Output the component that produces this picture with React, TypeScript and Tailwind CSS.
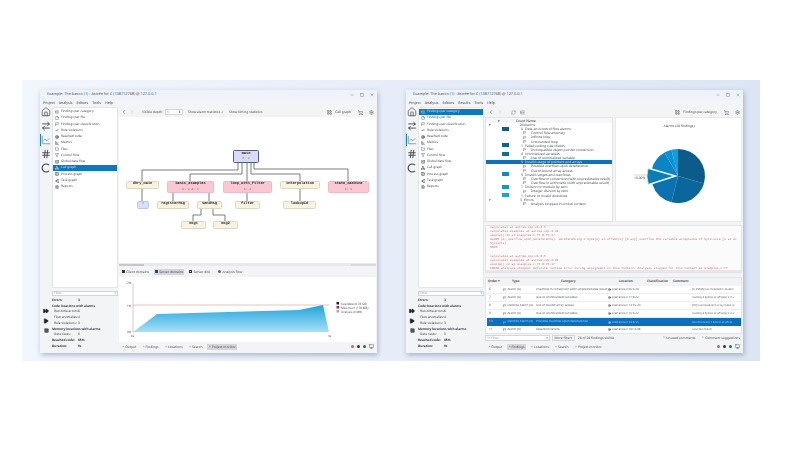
import React from "react";
import { Home, ArrowRightLeft, ChartLine, Hash, ChevronLeft, ChevronRight, Minus, Square, X, FileText, File, Folder, CheckCheck, Target, ChartBar, Filter, Database, Network, Grid2x2, ListTree, Share2, Settings, LayoutGrid, ShoppingCart, Flag, RefreshCw, Monitor, Play, FastForward, Search } from "lucide-react";

const NAV: [string, any][] = [
  ["Findings per category", ListTree], ["Findings per file", File], ["Findings per classification", Flag],
  ["Rule violations", CheckCheck], ["Reached code", Target], ["Metrics", ChartBar], ["Files", Folder],
  ["Control flow", Filter], ["Global data flow", Database], ["Call graph", Network], ["Process graph", Grid2x2],
  ["Task graph", Share2], ["Reports", FileText],
];

function StatRow({ label, value, bold, indent }: { label: string; value?: string; bold?: boolean; indent?: boolean }) {
  return (
    <div className={`flex h-[5.75px] items-center whitespace-nowrap ${bold ? "font-bold" : ""} ${indent ? "pl-[2px]" : ""}`}>
      <span className={indent ? "w-[24px]" : "w-[26px]"}>{label}</span>
      {value && <span>{value}</span>}
    </div>
  );
}

function Sidebar() {
  return (
    <div className="relative flex h-full w-[12px] shrink-0 flex-col items-center">
      <div className="flex flex-col items-center gap-[4px] text-[#33383f]">
        <Home size={10} strokeWidth={1.6} />
        <ArrowRightLeft size={10} strokeWidth={2} />
        <ChartLine size={10} strokeWidth={1.4} className="text-[#1f6f9e]" />
        <Hash size={10} strokeWidth={2} />
        <svg width="10" height="10" viewBox="0 0 10 10" fill="none" stroke="#3b4046" strokeWidth="1.1"><path d="M8 2.2A4 4 0 1 0 8 7.8" /></svg>
      </div>
      <div className="absolute left-0 top-[27px] h-[12px] w-[1px] bg-[#1f7fb8]" />
      <div className="mt-[135px] flex flex-col items-center gap-[4px] text-[#1c1f24]">
        <FastForward size={6} fill="currentColor" />
        <Play size={6} fill="currentColor" />
        <Square size={5} fill="#555" className="text-[#444]" />
      </div>
    </div>
  );
}

function NavColumn({ selected }: { selected: string }) {
  return (
    <div className="flex h-full w-[66px] shrink-0 flex-col text-[3.2px]">
      <div className="h-[181px] overflow-hidden rounded-[1px] border border-[#e4e5e8] bg-white pt-[0.5px]">
        {NAV.map(([name, Icon]) => (
          <div key={name} className={`flex h-[6.28px] items-center gap-[2px] whitespace-nowrap pl-[2px] ${name === selected ? "bg-[#0a78c8] text-[#bfe0fa]" : "text-[#44494f]"}`}>
            <Icon size={4} strokeWidth={2.5} />
            <span>{name}</span>
          </div>
        ))}
      </div>
      <div className="mt-[3px] flex h-[5px] items-center justify-between border border-[#d5d6d9] bg-white px-[1px] text-[#9a9ea5]">
        <span>Filter...</span><span>▾</span>
      </div>
      <div className="mt-[1.5px] text-[#33373d]">
        <StatRow label="Errors:" value="3" bold />
        <StatRow label="Code locations with alarms" bold />
        <StatRow label="Run-time errors:" value="6" indent />
        <StatRow label="Flow anomalies:" value="4" indent />
        <StatRow label="Rule violations:" value="3" indent />
        <StatRow label="Memory locations with alarms" bold />
        <StatRow label="Data races:" value="0" indent />
        <StatRow label="Reached code:" value="85%" bold />
        <StatRow label="Duration:" value="9s" bold />
      </div>
    </div>
  );
}

function BottomTabs({ active }: { active: string }) {
  return (
    <div className="flex h-[9.5px] shrink-0 items-center justify-between pl-[2px] pr-[2px] text-[#4b5057]">
      <div className="flex items-center gap-[3.5px]">
        {["Output", "Findings", "Locations", "Search", "Project monitor"].map((t) => (
          <span key={t} className={`flex h-[6.5px] items-center whitespace-nowrap px-[1.5px] ${t === active ? "bg-[#d5d6da]" : ""}`}>^ {t}</span>
        ))}
      </div>
      <div className="flex items-center gap-[3px]">
        <span className="h-[3px] w-[3px] rounded-full bg-[#e2555f]" />
        <span className="h-[3px] w-[3px] rounded-full bg-[#2b3a2c]" />
        <span className="h-[3px] w-[3px] rounded-full bg-[#157a3c]" />
        <Monitor size={5} className="text-[#444]" />
      </div>
    </div>
  );
}

function Win({ title, menu, children, selected }: { title: string; menu: string[]; children: React.ReactNode; selected: string }) {
  return (
    <div className="flex h-[262.5px] w-[337px] shrink-0 flex-col bg-[#f3f4f6] text-[3.3px] leading-none shadow-[1px_2px_5px_rgba(70,90,120,0.4)]">
      <div className="flex h-[10px] shrink-0 items-center justify-between bg-[#eef3fa] pl-[7px] pr-[3px] text-[3.8px] text-[#4e535a]">
        <span className="whitespace-nowrap">{title}</span>
        <div className="flex items-center gap-[6px]"><Minus size={4} /><Square size={4} /><X size={4} /></div>
      </div>
      <div className="flex h-[7px] shrink-0 items-center gap-[4px] pl-[3px] text-[3.6px] text-[#3c4148]">
        {menu.map((m) => <span key={m}>{m}</span>)}
      </div>
      <div className="flex min-h-0 flex-1">
        <Sidebar />
        <NavColumn selected={selected} />
        <div className="flex min-w-0 flex-1 flex-col pl-[1px] pr-[1px]">{children}</div>
      </div>
    </div>
  );
}

const NODES: { x: number; y: number; w: number; h: number; t: string; sub?: string; k: string }[] = [
  { x: 232, y: 150, w: 26, h: 13, t: "main", sub: "E: 3", k: "m" },
  { x: 125, y: 181, w: 33, h: 8, t: "dhry_main", k: "b" },
  { x: 166, y: 181, w: 47, h: 12, t: "basic_examples", sub: "E: 2  A: 3", k: "p" },
  { x: 222, y: 181, w: 49, h: 12, t: "loop_with_filter", sub: "E: 1", k: "p" },
  { x: 279, y: 181, w: 40, h: 8, t: "interpolation", k: "b" },
  { x: 327, y: 181, w: 41, h: 12, t: "state_machine", sub: "E: 1", k: "p" },
  { x: 136, y: 201, w: 12, h: 8, t: "-", k: "u" },
  { x: 156, y: 201, w: 32, h: 8, t: "registerMsg", k: "b" },
  { x: 196, y: 201, w: 25, h: 8, t: "sendMsg", k: "b" },
  { x: 234, y: 201, w: 25, h: 8, t: "filter", k: "b" },
  { x: 282, y: 201, w: 33, h: 8, t: "lookupId", k: "b" },
  { x: 180, y: 221, w: 25, h: 8, t: "msg1", k: "b" },
  { x: 212, y: 221, w: 25, h: 8, t: "msg2", k: "b" },
];
const STYLE: Record<string, string> = {
  m: "bg-[#d9dcf6] border-[#4f5c8c]",
  b: "bg-[#f8f2e0] border-[#ddd6c0]",
  p: "bg-[#fac8d2] border-[#f3b8c6]",
  u: "bg-[#d8e0f6] border-[#bcc8e8]",
};
const EDGES = [
  "M237 163V170H141V181", "M241 163V174H189V181", "M246 163V181", "M250 163V174H299V181", "M253 163V169H347V181",
  "M141 189V201", "M172 193V201", "M208 193V201", "M246 193V201", "M299 189V201",
  "M200 209V215H192V221", "M212 209V215H224V221",
];

function CallGraph() {
  return (
    <div className="relative h-[146px] shrink-0 overflow-hidden bg-white">
      <svg className="absolute inset-0" width="258" height="146" viewBox="118 117 258 146">
        {EDGES.map((d) => <path key={d} d={d} fill="none" stroke="#6a6d72" strokeWidth="0.9" />)}
      </svg>
      {NODES.map((n) => (
        <div key={n.t} style={{ left: n.x - 118, top: n.y - 117, width: n.w, height: n.h }}
          className={`absolute flex flex-col items-center justify-center gap-[1px] rounded-[1.5px] border-[0.6px] font-['Liberation_Mono',monospace] text-[3.6px] font-bold text-[#222] ${STYLE[n.k]}`}>
          <span>{n.t}</span>
          {n.sub && <span className="text-[3px] font-normal text-[#b0485c]">{n.sub}</span>}
        </div>
      ))}
    </div>
  );
}

function MonitorChart() {
  return (
    <div className="h-[65px] shrink-0 bg-white">
      <svg width="258" height="65" viewBox="118 277 258 65" fontSize="3" fill="#555">
        <defs>
          <linearGradient id="mem" x1="0" y1="0" x2="0" y2="1">
            <stop offset="0" stopColor="#1fa3dc" />
            <stop offset="1" stopColor="#a6e0f7" />
          </linearGradient>
        </defs>
        <path d="M132 332L156 314L298 310L322 305L328 332Z" fill="url(#mem)" />
        <path d="M132 283V333" stroke="#9a9a9a" strokeWidth="0.5" />
        <path d="M132 305H328" stroke="#e5968c" strokeWidth="0.6" />
        <text x="126" y="284">2%</text>
        <text x="126" y="307">1%</text>
        <text x="126" y="333">0%</text>
        <text x="130" y="337">0s</text>
        <text x="327" y="337">3s</text>
        <rect x="335.5" y="302" width="2.5" height="2.5" fill="#161b3a" />
        <rect x="335.5" y="306" width="2.5" height="2.5" fill="#c01f3c" />
        <rect x="335.5" y="310" width="2.5" height="2.5" fill="#8fb0d8" />
        <text x="340" y="304.5">Available (8.78 GB)</text>
        <text x="340" y="308.5">Maximum (178 MB)</text>
        <text x="340" y="312.5">Analysis (0 MB)</text>
      </svg>
    </div>
  );
}

function Window1() {
  return (
    <Win selected="Call graph" menu={["Project", "Analysis", "Editors", "Tools", "Help"]} title="Example: The basics (1) - Astrée for C (138712768) @ 127.0.0.1">
      <div className="flex h-[10px] shrink-0 items-center justify-between pl-[2px] pr-[2px] text-[#4b5057]">
        <div className="flex items-center gap-[2px]">
          <ChevronLeft size={6} /><ChevronRight size={6} className="text-[#b5b8bd]" />
          <span className="ml-[5px] whitespace-nowrap">Visible depth:</span>
          <span className="flex h-[5.5px] w-[18px] items-center justify-between border border-[#d5d6d9] bg-white px-[1px]">1<span>⇕</span></span>
          <span className="ml-[3px] whitespace-nowrap">Show alarm statistics ✓</span>
          <span className="ml-[3px] whitespace-nowrap">Show timing statistics</span>
        </div>
        <div className="flex items-center gap-[3px]">
          <LayoutGrid size={5} /><span className="whitespace-nowrap">Call graph</span>
          <ShoppingCart size={5} className="ml-[4px]" /><Settings size={5} className="ml-[3px]" />
        </div>
      </div>
      <CallGraph />
      <div className="flex h-[3px] shrink-0 items-center justify-between bg-[#e8e9ec]">
        <div className="h-[2px] w-[25px] bg-[#c5c7cb]" />
        <div className="h-[2px] w-[25px] bg-[#d7d8dc]" />
      </div>
      <div className="flex h-[11px] shrink-0 items-center gap-[4px] pl-[2px] text-[#4b5057]">
        <span className="flex items-center gap-[1px] whitespace-nowrap px-[1px]"><span className="h-[3px] w-[3px] bg-[#333]" />Client domains</span>
        <span className="flex h-[6px] items-center gap-[1px] whitespace-nowrap bg-[#d5d6da] px-[1px]"><span className="h-[3px] w-[3px] bg-[#1f4e79]" />Server domains</span>
        <span className="flex items-center gap-[1px] whitespace-nowrap px-[1px]"><span className="h-[3px] w-[3px] border-[0.5px] border-[#333]" />Server disk</span>
        <span className="ml-[3px] flex items-center gap-[1px] whitespace-nowrap"><span className="h-[3px] w-[3px] rounded-full bg-[#666]" />Analysis flow</span>
      </div>
      <MonitorChart />
      <BottomTabs active="Project monitor" />
    </Win>
  );
}

const TREE: { n?: string; t: string; lvl: number; bar?: string }[] = [
  { n: "26", t: "Alarms", lvl: 0 },
  { n: "6", t: "Data and control flow alarms", lvl: 1, bar: "#0b5f86" },
  { n: "1", t: "Control flow anomaly", lvl: 2 },
  { n: "2", t: "Infinite loop", lvl: 2 },
  { n: "3", t: "Unbounded loop", lvl: 2 },
  { n: "1", t: "Failed coding rule checks", lvl: 1, bar: "#0b6590" },
  { n: "1", t: "Incompatible object pointer conversion", lvl: 2 },
  { n: "4", t: "Uninitialized variables", lvl: 1, bar: "#0b6d9c" },
  { n: "4", t: "Use of uninitialized variable", lvl: 2 },
  { n: "5", t: "Invalid usage of pointers and arrays", lvl: 1 },
  { n: "2", t: "Possible overflow upon dereference", lvl: 2 },
  { n: "3", t: "Out of bound array access", lvl: 2 },
  { n: "5", t: "Invalid ranges and overflows", lvl: 1, bar: "#0b8cc4" },
  { n: "3", t: "Overflow in conversion (with unpredictable result)", lvl: 2 },
  { n: "2", t: "Overflow in arithmetic (with unpredictable result)", lvl: 2 },
  { n: "1", t: "Division or modulo by zero", lvl: 1, bar: "#0b98cc" },
  { n: "1", t: "Integer division by zero", lvl: 2 },
  { n: "1", t: "Failure or invalid directives", lvl: 1, bar: "#17a5d8" },
  { n: "3", t: "Errors", lvl: 0 },
  { n: "3", t: "Analysis stopped in critical context", lvl: 2 },
];

function TreePane() {
  return (
    <div className="w-[128px] shrink-0 overflow-hidden border border-[#e2e3e6] bg-white text-[3.4px]">
      <div className="flex h-[4.5px] items-center bg-[#f6f6f8] text-[#333]">
        <span className="ml-[12px]">▾</span>
        <span className="ml-[16px] whitespace-nowrap">Count Name</span>
      </div>
      {TREE.map((r, i) => (
        <div key={i} className={`flex h-[4.17px] items-center whitespace-nowrap ${i === 9 ? "bg-[#0a72c4] text-[#bfe0fa]" : "text-[#4b5057]"}`}>
          <span className="w-[16px] pl-[3px]">{r.lvl === 0 ? "▾" : ""}</span>
          <span className="h-[4px] w-[7px] shrink-0" style={{ background: r.bar }} />
          <span className={r.lvl === 0 ? "ml-[11px] w-[3px]" : r.lvl === 1 ? "ml-[12px] w-[3px]" : "ml-[14px] w-[7px]"}>{r.lvl === 2 ? <Flag size={3} strokeWidth={3} /> : r.n}</span>
          <span className="ml-[1px]">{r.t}</span>
        </div>
      ))}
    </div>
  );
}

function polar(cx: number, cy: number, r: number, deg: number) {
  const a = ((deg - 90) * Math.PI) / 180;
  return [cx + r * Math.cos(a), cy + r * Math.sin(a)];
}
function slice(cx: number, cy: number, r: number, a: number, b: number) {
  const [x1, y1] = polar(cx, cy, r, a);
  const [x2, y2] = polar(cx, cy, r, b);
  return `M${cx} ${cy}L${x1} ${y1}A${r} ${r} 0 ${b - a > 180 ? 1 : 0} 1 ${x2} ${y2}Z`;
}
const PIE: [number, number, string][] = [
  [0, 106, "#0b5c88"], [106, 194, "#0b669c"], [194, 252, "#0a72ae"], [286, 330, "#0a84c2"], [330, 346, "#0a92d2"], [346, 360, "#0a9fe0"],
];

function PiePane() {
  return (
    <div className="ml-[2px] min-w-0 flex-1 border border-[#e8e9ec] bg-white">
      <svg width="127" height="103" viewBox="614 118 127 103" fontSize="3.3" fill="#444">
        <text x="677" y="127" textAnchor="middle">Alarms (26 findings)</text>
        {PIE.map(([a, b, c]) => <path key={a} d={slice(676, 176, 27, a, b)} fill={c} />)}
        <path d={slice(672, 176, 27, 252, 286)} fill="#0a7cb8" stroke="#dff1fa" strokeWidth="0.8" />
        <path d="M632 175H648" stroke="#999" strokeWidth="0.4" />
        <text x="632" y="179">10.00%</text>
      </svg>
    </div>
  );
}

const LOG1 = [
  "calculate1 at astree.c#p:21:8:5",
  "calculate1_examples at astree.c#p:4:20",
  "simple():22 at examples.c:77:8:75:17",
  "ALARM (A: overflow_upon_dereference): dereferencing 1 byte(s) at offset(s) [0 any] overflow the variable acceptance of byte-size [2 at ex",
  "%{points}",
  "%%%%",
  "",
  "calculate1 at astree.c#p:21:8:5",
  "calculate1_examples at astree.c#p:4:20",
  "simple():22 at examples.c:77:8:75:17",
  "ERROR analysis_stopped: Definite runtime error during assignment in this context. Analysis stopped for this context at examples.c:77",
];

function LogPane() {
  return (
    <div className="mt-[3px] flex h-[48px] shrink-0 flex-col border border-[#e2e3e6] bg-[#fbfbfc] font-['Liberation_Mono',monospace] text-[3px] text-[#c9706c]">
      <div className="min-h-0 flex-1 overflow-hidden pl-[4px]">
        {LOG1.map((l, i) => <div key={i} className="h-[4.1px] whitespace-nowrap">{l}</div>)}
      </div>
      <div className="h-[2.5px] bg-[#e6e7ea]" />
    </div>
  );
}

const ROWS = [
  ["6", "Alarm (A)", "Overflow in conversion (with unpredictable result)", "scenarios.c:66:4-20", "[0, 65535] not included in double"],
  ["7", "Alarm (A)", "Use of uninitialized variables", "scenarios.c:71:8-22", "reading 4 byte(s) at offset(s) 0 in v"],
  ["8", "Definite Alarm (A)", "Out of bound array access", "scenarios.c:73:15-20", "[70] not included in array index ra"],
  ["9", "Alarm (A)", "Use of uninitialized variables", "scenarios.c:76:4-22", "reading 4 byte(s) at offset(s) 0 in v"],
  ["10", "Definite Alarm (A)", "Possible overflow upon dereference", "scenarios.c:79:8-15", "dereferencing 1 byte(s) at offset"],
  ["11", "Alarm (A)", "Assertion failure", "scenarios.c:107:4-38", "assertion failed"],
];
const COLS = "grid grid-cols-[15px_33px_73px_38px_26px_19px_1fr]";

function FindingsTable() {
  return (
    <div className="mt-[4px] h-[57px] shrink-0 overflow-hidden border border-[#e2e3e6] bg-white pl-[1px] text-[3.2px]">
      <div className={`${COLS} h-[8px] items-center whitespace-nowrap bg-[#f2f3f5] font-bold text-[#4a4e55]`}>
        <span className="pl-[1px]">Order ▾</span><span className="pl-[10px]">Type</span><span className="pl-[26px]">Category</span>
        <span className="pl-[11px]">Location</span><span className="pl-[1px]">Classification</span><span className="pl-[1px]">Comment</span><span />
      </div>
      {ROWS.map((r, i) => (
        <div key={r[0]} className={`${COLS} h-[8px] items-center overflow-hidden whitespace-nowrap ${i === 4 ? "bg-[#0a6fc0] text-[#9fd2f5]" : "border-b-[0.5px] border-[#eceef0] text-[#555a61]"}`}>
          <span className="pl-[2px]">{r[0]}</span>
          <span className="flex items-center gap-[1.5px] overflow-hidden pl-[1px] text-[3.1px]"><Flag size={3} strokeWidth={3} />{r[1]}</span>
          <span className="overflow-hidden pl-[1px] text-[3.1px]">{r[2]}</span>
          <span className="flex items-center gap-[1px] overflow-hidden text-[3px]"><Target size={3} strokeWidth={3} />{r[3]}</span>
          <span /><span />
          <span className="overflow-hidden pl-[1px] text-[2.7px]">{r[4]}</span>
        </div>
      ))}
    </div>
  );
}

function Window2() {
  return (
    <Win selected="Findings per category" menu={["Project", "Analysis", "Editors", "Results", "Tools", "Help"]} title="Example: The basics (1) - Astrée for C (138712768) @ 127.0.0.1">
      <div className="flex h-[10px] shrink-0 items-center justify-between pl-[3px] pr-[2px] text-[#4b5057]">
        <div className="flex items-center gap-[3px]">
          <ChevronLeft size={6} /><ChevronRight size={6} className="text-[#b5b8bd]" />
          <RefreshCw size={5} className="ml-[5px] text-[#888]" /><ListTree size={5} className="ml-[1px]" />
        </div>
        <div className="flex items-center gap-[3px]">
          <LayoutGrid size={5} /><span className="whitespace-nowrap">Findings per category</span>
          <ShoppingCart size={5} className="ml-[4px]" /><Settings size={5} className="ml-[3px]" />
        </div>
      </div>
      <div className="flex h-[105px] shrink-0">
        <TreePane />
        <PiePane />
      </div>
      <LogPane />
      <FindingsTable />
      <div className="flex h-[8px] shrink-0 items-center justify-between text-[#4b5057]">
        <div className="flex items-center gap-[2px]">
          <span className="flex h-[5.5px] w-[65px] items-center justify-between border border-[#d5d6d9] bg-white px-[1px] text-[#9a9ea5]"><span className="flex items-center gap-[1px]"><Search size={3} />Filter...</span><span>▾</span></span>
          <span className="flex h-[5.5px] items-center whitespace-nowrap border border-[#d5d6d9] px-[1.5px]">More filters</span>
          <span className="ml-[1px] whitespace-nowrap">26 of 26 findings visible</span>
        </div>
        <div className="flex items-center gap-[6px] pr-[2px]">
          <span className="whitespace-nowrap">⌃ Unused comments</span>
          <span className="whitespace-nowrap">⌃ Comment suggestions</span>
        </div>
      </div>
      <BottomTabs active="Findings" />
    </Win>
  );
}

export default function App() {
  return (
    <div className="h-[450px] w-[799px] overflow-hidden bg-white pt-[80px] font-['Noto_Sans',sans-serif] [text-rendering:geometricPrecision]">
      <div className="ml-[22px] h-[281px] w-[738px] bg-gradient-to-r from-[#f2f6fd] to-[#dbe5f4] pl-[18px] pt-[10px]">
        <div className="flex gap-[29px] blur-[0.4px]">
          <Window1 />
          <Window2 />
        </div>
      </div>
    </div>
  );
}
